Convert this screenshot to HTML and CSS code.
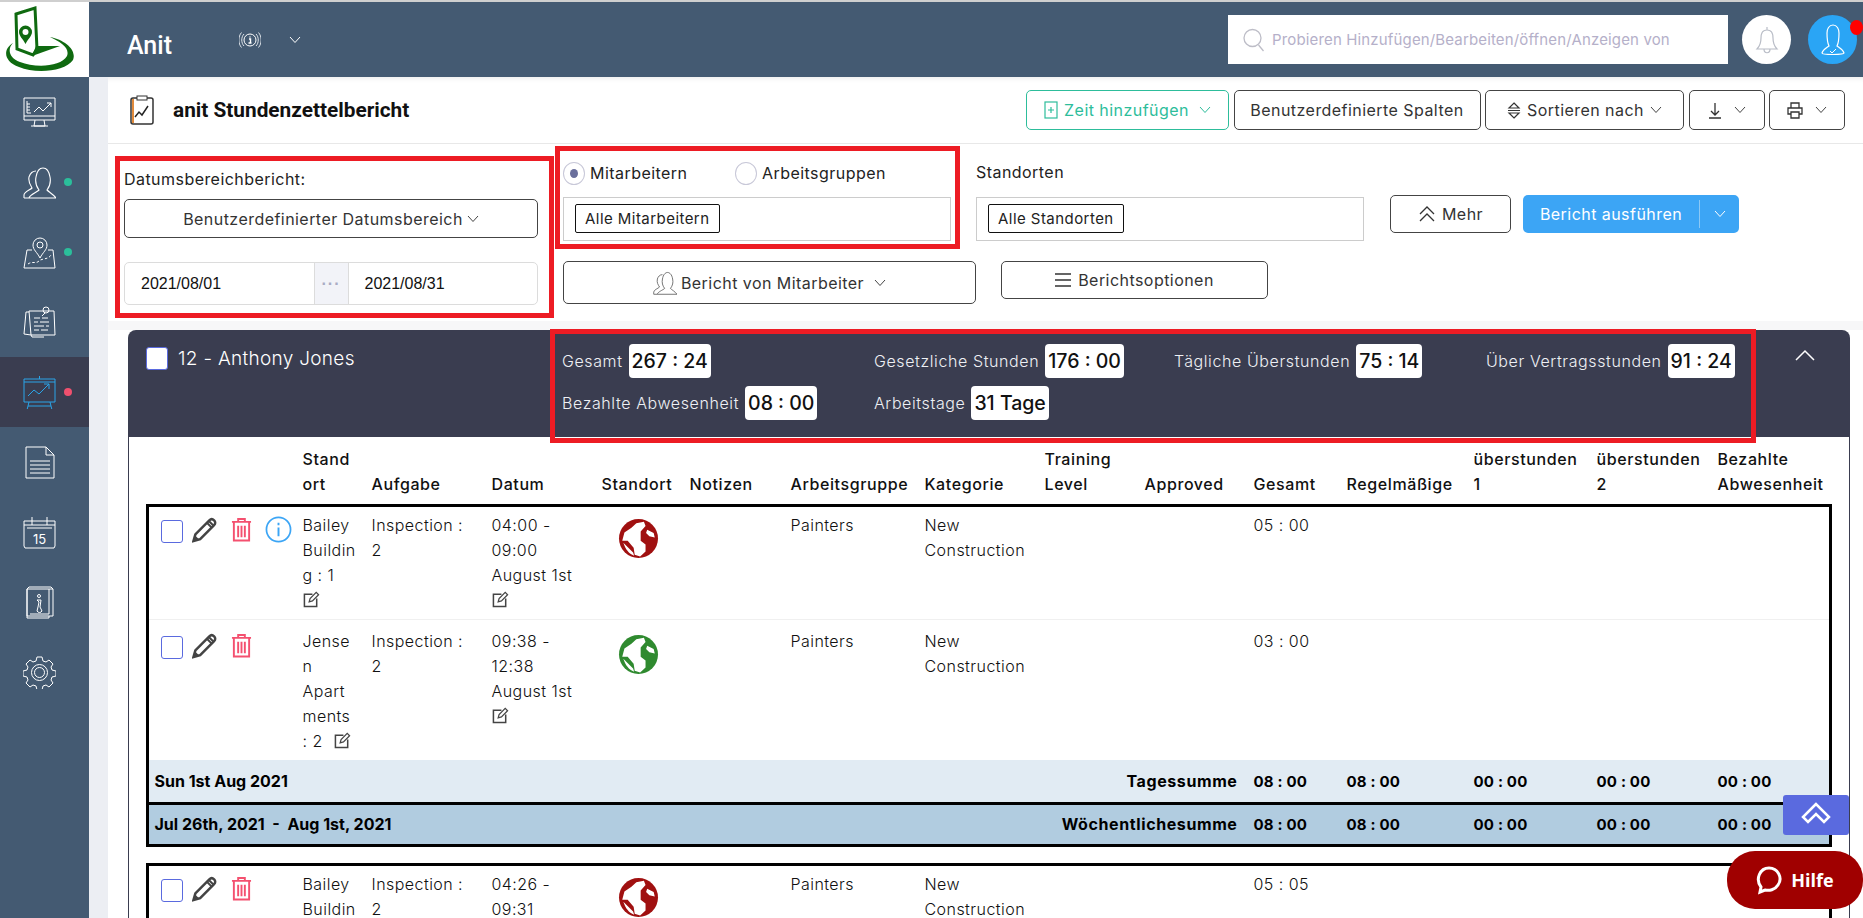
FILE: index.html
```html
<!DOCTYPE html>
<html lang="de">
<head>
    <meta charset="UTF-8">
    <meta name="viewport" content="width=device-width, initial-scale=1.0">
    <title>anit Stundenzettelbericht</title>
    <link rel="stylesheet" href="styles.css">
</head>
<body>
    <svg class="defs" width="0" height="0">
        <symbol id="chev" viewBox="0 0 12 8"><polyline points="1,1 6,6.5 11,1" fill="none" stroke="currentColor" stroke-width="1"/></symbol>
        <symbol id="pencil" viewBox="0 0 26 26"><path d="M1.5 24.5l2-7L18 3c1.5-1.5 3.500-1.500 5 0s1.500 3.500 0 5L8.500 22.500z" fill="none" stroke="#444" stroke-width="2.600"/><path d="M1.500 24.500l1.600-6 4.600 4.600z" fill="#444"/><path d="M15.500 5.500l5 5M17.500 3.600l5 5" stroke="#444" stroke-width="2"/></symbol>
        <symbol id="trash" viewBox="0 0 22 26"><path d="M1 5h20M7.500 5V2h7v3M3 5v19.500h16V5" fill="none" stroke="#f4506f" stroke-width="2"/><path d="M7.500 9v12M11 9v12M14.500 9v12" stroke="#f4506f" stroke-width="2"/></symbol>
        <symbol id="edit" viewBox="0 0 18 18"><path d="M10 3.500H1.500v13h13V8" fill="none" stroke="#444" stroke-width="1.600"/><path d="M6.500 11.500l1-3.500L14 1.500l2.500 2.500L10 10.500z" fill="none" stroke="#444" stroke-width="1.300"/></symbol>
        <symbol id="globe" viewBox="0 0 36 36"><path d="M5 12.500L11.500 8l4.500-4 7-1.500 1.500 4-4.500 5 0 8.500 4.500 3.500 0 6.500-5 4.500-5-1.500-1-6.500L8 20H3z M26 10l6 3 1 4-5-1-3-3z M4 22l9 9 1 3C9 32 6 28 4 22z" fill="#fff"/></symbol>
        <symbol id="people" viewBox="0 0 33 33"><path d="M6 32c0-3 8-6 10-8-3-4-4-8-3-13 1-6 4-9 7-9s6 3 7 9c1 5 0 9-3 13 2 2 6 4 9 8zM1 32v-3c0-3 6-5 8-7-2-3-4-6-3-11 1-3 3-6 7-6M1 32h5" fill="none" stroke="currentColor" stroke-width="1.100"/></symbol>
    </svg>

    <div class="page">
        <aside class="sidebar">
            <div class="logo">
                <svg width="72" height="68" viewBox="0 0 72 68">
                    <path d="M8 38C-2 44-2 56 14 62c16 7 46 5 54-7 4-10-8-20-23-23 11 5 20 11 17 19-6 11-32 12-47 6C4 53 2 44 8 38z" fill="#0f6a10"/>
                    <path d="M11 9L30 3l2 41-4 6-16-6z" fill="#fff" stroke="#0f6a10" stroke-width="3"/>
                    <path d="M27 51L55 41 31 41z" fill="#0f6a10"/>
                    <path d="M14 27a6.500 6.500 0 0 1 13 0c0 4-4 7-6.500 12C18 34 14 31 14 27z" fill="#0f6a10"/>
                    <circle cx="20.500" cy="27" r="3" fill="#fff"/>
                </svg>
            </div>
            <nav>
                <a class="nav-item">
                    <svg class="nav-icon" viewBox="0 0 33 33"><path d="M1 2h31v22H1zM1 20h31M12 24l-1 6h11l-1-6M8 30h17M4 5v12h4M4 8h3M4 11h3M4 14h3M11 16l5-5 4 4 8-8M24 7h4v4"/></svg>
                </a>
                <a class="nav-item">
                    <svg class="nav-icon nav-people"><use href="#people"/></svg>
                    <span class="dot dot-green"></span>
                </a>
                <a class="nav-item">
                    <svg class="nav-icon" viewBox="0 0 33 33"><path d="M17 22c-3-6-7-8-7-13a7 7 0 0 1 14 0c0 5-4 7-7 13z"/><circle cx="17" cy="9" r="3"/><path d="M9 14H4L1 32h31l-2-18h-5"/><path d="M5 28c4-3 8 0 11-3s9-1 12-6" stroke-dasharray="2.500 2"/></svg>
                    <span class="dot dot-green"></span>
                </a>
                <a class="nav-item">
                    <svg class="nav-icon" viewBox="0 0 33 33"><path d="M6 6H3L1 28l7 1M6 5h25l1 24H8zM8 29l1 2h12"/><circle cx="23" cy="4" r="3"/><path d="M22 7l-3 3M11 12h6M19 12h6M11 16h4M17 16h9M11 20h10M23 20h3M11 24h5M18 24h7"/></svg>
                </a>
                <a class="nav-item active">
                    <svg class="nav-icon" viewBox="0 0 33 33"><path d="M1 3h31v23H1zM16.500 0v3M6 26l-2 8M27 26l2 8M5 30h23M1 6h31M5 20l6-6 5 4 10-10M21 8h5v5"/></svg>
                    <span class="dot dot-red"></span>
                </a>
                <a class="nav-item">
                    <svg class="nav-icon" viewBox="0 0 33 33"><path d="M3 1h20l8 8v23H3zM23 1v8h8M7 15h20M7 19h20M7 23h20M7 27h20"/></svg>
                </a>
                <a class="nav-item">
                    <svg class="nav-icon" viewBox="0 0 33 33"><path d="M1 5h31v4H1zM1 9v21l1 2h29l1-2V9M9 1v8M24 1v8M4 12h25"/><text x="16.500" y="28" class="nav-num">15</text></svg>
                </a>
                <a class="nav-item">
                    <svg class="nav-icon" viewBox="0 0 33 33"><path d="M4 3h26v27H4zM4 3v29h22v-2M30 3l-2-2H6L4 3M7 28h19V3"/><circle cx="16" cy="10" r="1.500"/><path d="M14 14h4l-1 7 2 4c-1 2-4 2-5 0l1-4 1-5z"/></svg>
                </a>
                <a class="nav-item">
                    <svg class="nav-icon" viewBox="0 0 33 33"><path d="M14 1h5l1 4 3 1 3-2 4 4-2 3 1 3 4 1v5l-4 1-1 3 2 3-4 4-3-2-3 1-1 4h-5l-1-4-3-1-3 2-4-4 2-3-1-3-4-1v-5l4-1 1-3-2-3 4-4 3 2 3-1z"/><circle cx="16.500" cy="16.500" r="8"/><circle cx="16.500" cy="16.500" r="5"/></svg>
                </a>
            </nav>
        </aside>

        <div class="content">
            <header class="topbar">
                <div class="brand">Anit</div>
                <svg class="info-mark" viewBox="0 0 22 18"><circle cx="11" cy="9" r="6" fill="none" stroke="#fff"/><path d="M5 3C2 6 2 12 5 15M17 3c3 3 3 9 0 12M2.500 1.500c-3.500 4-3.500 11 0 15M19.500 1.500c3.500 4 3.500 11 0 15" fill="none" stroke="#dfe4ea"/><path d="M11 5.500v1M10 8h1.500v4M9.500 12h3" fill="none" stroke="#fff" stroke-width="1.400"/></svg>
                <svg class="chev chev-top"><use href="#chev"/></svg>
                <div class="search">
                    <svg class="search-icon" viewBox="0 0 22 24"><circle cx="9.500" cy="10" r="8.500" fill="none" stroke="#bdbdc7" stroke-width="1.300"/><path d="M15.500 17l5 6" stroke="#bdbdc7" stroke-width="1.300"/></svg>
                    <span>Probieren Hinzufügen/Bearbeiten/öffnen/Anzeigen von</span>
                </div>
                <div class="round round-bell">
                    <svg width="24" height="30" viewBox="0 0 24 30"><path d="M12 2v3M12 5c-5 0-6 4-6 8 0 5-1 8-4 11h20c-3-3-4-6-4-11 0-4-1-8-6-8zM9 24c0 5 6 5 6 0" fill="none" stroke="#b8bcc6" stroke-width="1.200"/></svg>
                </div>
                <div class="round round-user">
                    <svg width="26" height="36" viewBox="0 0 26 36"><path d="M9 24C5 27 3 28 2 31c0 2 22 2 22 0-1-3-3-4-7-7 2-4 2-9 2-13 0-4-2-8-6-8s-6 4-6 8c0 4 0 9 2 13z" fill="none" stroke="#fff" stroke-width="1.200"/><path d="M10 29l2 2 4-4" fill="none" stroke="#fff"/></svg>
                    <span class="user-alert"></span>
                </div>
            </header>

            <main class="main">
                <div class="panel">
                    <div class="toolbar">
                        <div class="page-title">
                            <svg width="24" height="30" viewBox="0 0 24 30"><rect x="1" y="3" width="22" height="26" rx="2" fill="#fff" stroke="#333" stroke-width="1.500"/><rect x="2" y="4" width="2" height="24" fill="#e08a3c"/><rect x="7" y="1" width="10" height="4" fill="#fff" stroke="#333"/><path d="M5 22l4-5 3 3 6-9" fill="none" stroke="#222" stroke-width="1.500"/></svg>
                            <h1>anit Stundenzettelbericht</h1>
                        </div>
                        <div class="tool-buttons">
                            <button class="btn btn-add">
                                <svg width="14" height="18" viewBox="0 0 14 18"><rect x="1" y="1" width="12" height="16" fill="none" stroke="#2dbd9b" stroke-width="1.200"/><path d="M7 6v6M4 9h6" stroke="#2dbd9b" stroke-width="1.200"/></svg>
                                Zeit hinzufügen
                                <svg class="chev"><use href="#chev"/></svg>
                            </button>
                            <button class="btn btn-cols">Benutzerdefinierte Spalten</button>
                            <button class="btn btn-sort">
                                <svg width="14" height="17" viewBox="0 0 14 17"><path d="M7 1l5 5H2zM7 16l5-5H2zM1 8.500h12" fill="none" stroke="#333" stroke-width="1.200"/></svg>
                                Sortieren nach
                                <svg class="chev"><use href="#chev"/></svg>
                            </button>
                            <button class="btn btn-icon">
                                <svg width="14" height="17" viewBox="0 0 14 17"><path d="M7 1v12M3 9l4 4 4-4M1 16h12" fill="none" stroke="#333" stroke-width="1.300"/></svg>
                                <svg class="chev"><use href="#chev"/></svg>
                            </button>
                            <button class="btn btn-icon">
                                <svg width="16" height="17" viewBox="0 0 16 17"><path d="M4 6V1h8v5M4 12H1V6h14v6h-3M4 10h8v6H4z" fill="none" stroke="#333" stroke-width="1.300"/></svg>
                                <svg class="chev"><use href="#chev"/></svg>
                            </button>
                        </div>
                    </div>

                    <section class="filters">
                        <div class="date-col">
                            <label class="date-label">Datumsbereichbericht:</label>
                            <button class="btn btn-wide btn-range">Benutzerdefinierter Datumsbereich <svg class="chev"><use href="#chev"/></svg></button>
                            <div class="date-group">
                                <span class="date-val">2021/08/01</span>
                                <span class="date-sep">···</span>
                                <span class="date-val">2021/08/31</span>
                            </div>
                        </div>
                        <div class="who-col">
                            <div class="radio-row">
                                <span class="radio radio-on"></span><span class="radio-text">Mitarbeitern</span>
                                <span class="radio"></span><span class="radio-text">Arbeitsgruppen</span>
                            </div>
                            <div class="select-box"><span class="tag">Alle Mitarbeitern</span></div>
                            <button class="btn btn-wide btn-who">
                                <svg class="who-icon"><use href="#people"/></svg>
                                Bericht von Mitarbeiter <svg class="chev"><use href="#chev"/></svg>
                            </button>
                        </div>
                        <div class="loc-col">
                            <div class="loc-top">
                                <div class="loc-field">
                                    <div class="loc-label">Standorten</div>
                                    <div class="select-box"><span class="tag">Alle Standorten</span></div>
                                </div>
                                <div class="run-actions">
                                    <button class="btn btn-more">
                                        <svg width="18" height="18" viewBox="0 0 18 18"><path d="M2 9l7-7 7 7M2 16l7-7 7 7" fill="none" stroke="#333" stroke-width="1.300"/></svg>
                                        Mehr
                                    </button>
                                    <button class="btn btn-run">
                                        <span class="run-text">Bericht ausführen</span>
                                        <span class="run-caret"><svg class="chev"><use href="#chev"/></svg></span>
                                    </button>
                                </div>
                            </div>
                            <button class="btn btn-options">
                                <svg width="16" height="14" viewBox="0 0 16 14"><path d="M0 1h16M0 7h16M0 13h16" stroke="#333" stroke-width="1.300"/></svg>
                                Berichtsoptionen
                            </button>
                        </div>
                    </section>

                    <div class="band"></div>

                    <section class="card">
                        <div class="card-head">
                            <div class="person">
                                <span class="check check-white"></span>
                                <span class="person-name">12 - Anthony Jones</span>
                            </div>
                            <div class="stats">
                                <div class="stat"><span>Gesamt</span><b>267 : 24</b></div>
                                <div class="stat"><span>Gesetzliche Stunden</span><b>176 : 00</b></div>
                                <div class="stat"><span>Tägliche Überstunden</span><b>75 : 14</b></div>
                                <div class="stat"><span>Über Vertragsstunden</span><b>91 : 24</b></div>
                                <div class="stat"><span>Bezahlte Abwesenheit</span><b>08 : 00</b></div>
                                <div class="stat"><span>Arbeitstage</span><b>31 Tage</b></div>
                            </div>
                            <svg class="collapse" viewBox="0 0 20 12"><polyline points="1,11 10,2 19,11" fill="none" stroke="#fff" stroke-width="1.500"/></svg>
                        </div>

                        <div class="card-body">
                            <div class="cols col-head">
                                <div></div>
                                <div>Stand<br>ort</div>
                                <div>Aufgabe</div>
                                <div>Datum</div>
                                <div>Standort</div>
                                <div>Notizen</div>
                                <div>Arbeitsgruppe</div>
                                <div>Kategorie</div>
                                <div>Training<br>Level</div>
                                <div>Approved</div>
                                <div>Gesamt</div>
                                <div>Regelmäßige</div>
                                <div>überstunden<br>1</div>
                                <div>überstunden<br>2</div>
                                <div>Bezahlte<br>Abwesenheit</div>
                            </div>

                            <div class="entries">
                                <div class="cols entry entry-first">
                                    <div class="actions">
                                        <span class="check"></span>
                                        <svg class="ic-pencil"><use href="#pencil"/></svg>
                                        <svg class="ic-trash"><use href="#trash"/></svg>
                                        <svg class="ic-info" viewBox="0 0 28 28"><circle cx="14" cy="14" r="12.500" fill="none" stroke="#3ca5f5" stroke-width="1.800"/><path d="M14 7v2.500M14 12v9" stroke="#3ca5f5" stroke-width="2"/></svg>
                                    </div>
                                    <div>Bailey<br>Buildin<br>g : 1<br><svg class="ic-edit"><use href="#edit"/></svg></div>
                                    <div>Inspection :<br>2</div>
                                    <div>04:00 -<br>09:00<br>August 1st<br><svg class="ic-edit"><use href="#edit"/></svg></div>
                                    <div class="globe-cell"><svg class="globe globe-red"><use href="#globe"/></svg></div>
                                    <div></div>
                                    <div>Painters</div>
                                    <div>New<br>Construction</div>
                                    <div></div>
                                    <div></div>
                                    <div>05 : 00</div>
                                </div>
                                <div class="cols entry entry-second">
                                    <div class="actions">
                                        <span class="check"></span>
                                        <svg class="ic-pencil"><use href="#pencil"/></svg>
                                        <svg class="ic-trash"><use href="#trash"/></svg>
                                    </div>
                                    <div>Jense<br>n<br>Apart<br>ments<br>: 2 <svg class="ic-edit ic-inline"><use href="#edit"/></svg></div>
                                    <div>Inspection :<br>2</div>
                                    <div>09:38 -<br>12:38<br>August 1st<br><svg class="ic-edit"><use href="#edit"/></svg></div>
                                    <div class="globe-cell"><svg class="globe globe-green"><use href="#globe"/></svg></div>
                                    <div></div>
                                    <div>Painters</div>
                                    <div>New<br>Construction</div>
                                    <div></div>
                                    <div></div>
                                    <div>03 : 00</div>
                                </div>
                                <div class="cols total total-day">
                                    <div class="total-date">Sun 1st Aug 2021</div>
                                    <div class="total-label">Tagessumme</div>
                                    <div>08 : 00</div><div>08 : 00</div><div>00 : 00</div><div>00 : 00</div><div>00 : 00</div>
                                </div>
                                <div class="cols total total-week">
                                    <div class="total-date">Jul 26th, 2021 &nbsp;-&nbsp; Aug 1st, 2021</div>
                                    <div class="total-label">Wöchentlichesumme</div>
                                    <div>08 : 00</div><div>08 : 00</div><div>00 : 00</div><div>00 : 00</div><div>00 : 00</div>
                                </div>
                            </div>

                            <div class="entries entries-next">
                                <div class="cols entry entry-first">
                                    <div class="actions">
                                        <span class="check"></span>
                                        <svg class="ic-pencil"><use href="#pencil"/></svg>
                                        <svg class="ic-trash"><use href="#trash"/></svg>
                                    </div>
                                    <div>Bailey<br>Buildin</div>
                                    <div>Inspection :<br>2</div>
                                    <div>04:26 -<br>09:31</div>
                                    <div class="globe-cell"><svg class="globe globe-red"><use href="#globe"/></svg></div>
                                    <div></div>
                                    <div>Painters</div>
                                    <div>New<br>Construction</div>
                                    <div></div>
                                    <div></div>
                                    <div>05 : 05</div>
                                </div>
                            </div>
                        </div>
                    </section>
                </div>
            </main>
        </div>

        <div class="mark mark-date"></div>
        <div class="mark mark-who"></div>
        <div class="mark mark-stats"></div>

        <button class="to-top">
            <svg width="30" height="26" viewBox="0 0 30 26"><path d="M15 2L2 15l5 5 8-8 8 8 5-5z" fill="none" stroke="#fff" stroke-width="2.500"/></svg>
        </button>
        <button class="help">
            <svg width="26" height="30" viewBox="0 0 26 30"><path d="M4 27l1-5C-1 14 4 3 13 3s14 10 9 17c-3 5-9 6-13 5z" fill="none" stroke="#fff" stroke-width="3"/></svg>
            Hilfe
        </button>
    </div>
</body>
</html>
```

FILE: styles.css
```css
* {
    box-sizing: border-box;
}
html, body {
    margin: 0;
    height: 100%;
    overflow: hidden;
}
body {
    font-family: Inter, "Open Sans", sans-serif;
    font-size: 16px;
    letter-spacing: 0.45px;
    color: #222;
    background: white;
}
h1 {
    margin: 0;
}
button {
    font-family: inherit;
    letter-spacing: inherit;
}
.defs {
    position: absolute;
}
.page {
    position: relative;
    display: flex;
    height: 918px;
    overflow: hidden;
    border-top: 2px solid #cfcfcf;
}

/* sidebar */
.sidebar {
    width: 89px;
    flex-shrink: 0;
    background: #445a72;
}
.logo {
    height: 75px;
    background: white;
    padding: 3px 0 0 5px;
}
.nav-item {
    display: flex;
    align-items: center;
    height: 70px;
    padding-left: 23px;
}
.nav-item.active {
    background: #3a3d50;
}
.nav-icon {
    width: 33px;
    height: 33px;
    fill: none;
    stroke: #fff;
    stroke-width: 1;
}
.nav-people {
    color: #fff;
    stroke: none;
}
.active .nav-icon {
    stroke: #2aa5e8;
}
.nav-num {
    font-size: 13px;
    fill: #fff;
    stroke: none;
    text-anchor: middle;
    letter-spacing: 0;
}
.dot {
    width: 8px;
    height: 8px;
    margin-left: 8px;
    border-radius: 50%;
}
.dot-green {
    background: #2bbf9b;
}
.dot-red {
    background: #f0506e;
}

/* top bar */
.content {
    flex: 1;
    min-width: 0;
    display: flex;
    flex-direction: column;
}
.topbar {
    display: flex;
    align-items: center;
    height: 75px;
    padding-left: 38px;
    background: #445a72;
    color: white;
}
.brand {
    width: 112px;
    font-size: 25px;
    font-weight: 500;
    font-family: Roboto, sans-serif;
    letter-spacing: 0;
    margin-top: 12px;
}
.info-mark {
    width: 22px;
    height: 18px;
}
.chev {
    width: 12px;
    height: 8px;
    color: #444;
    flex-shrink: 0;
}
.chev-top {
    margin: 0 0 0 28px;
    color: white;
}
.search {
    display: flex;
    align-items: center;
    gap: 7px;
    width: 500px;
    height: 49px;
    margin: 0 14px 0 auto;
    padding-left: 15px;
    background: white;
    color: #b5b0c9;
    font-size: 15px;
    letter-spacing: 0.15px;
}
.search-icon {
    width: 22px;
    height: 24px;
}
.round {
    position: relative;
    display: flex;
    align-items: center;
    justify-content: center;
    width: 49px;
    height: 49px;
    border-radius: 50%;
}
.round-bell {
    background: white;
}
.round-user {
    margin: 0 6px 0 17px;
    background: #2aa5f5;
}
.user-alert {
    position: absolute;
    top: 5px;
    right: -6px;
    width: 13px;
    height: 15px;
    border-radius: 50%;
    background: #f00;
}

/* page area */
.main {
    flex: 1;
    min-height: 0;
    padding-left: 19px;
    background: #eceef3;
}
.panel {
    height: 100%;
    background: white;
}
.toolbar {
    display: flex;
    justify-content: space-between;
    align-items: center;
    height: 67px;
    padding: 0 18px 0 22px;
    border-bottom: 1px solid #e8e8e8;
    box-shadow: inset 0 6px 6px -6px rgba(0, 0, 0, 0.12);
}
.page-title {
    display: flex;
    align-items: center;
    gap: 19px;
}
h1 {
    font-family: Roboto, sans-serif;
    font-size: 20.8px;
    font-weight: 700;
    letter-spacing: 0;
    color: #111;
}
.tool-buttons {
    display: flex;
    gap: 4.5px;
}
.btn {
    display: flex;
    align-items: center;
    justify-content: center;
    gap: 6px;
    height: 40px;
    padding: 0;
    background: white;
    border: 1.5px solid #444;
    border-radius: 5px;
    font-size: 16px;
    color: #333;
    cursor: pointer;
}
.btn-add {
    width: 203px;
    border-color: #2dbd9b;
    color: #2dbd9b;
}
.btn-add .chev {
    margin-left: 4px;
    color: #2dbd9b;
}
.btn-cols {
    width: 247px;
}
.btn-sort {
    width: 199px;
}
.btn-icon {
    width: 76px;
    gap: 12px;
}
.btn-wide {
    width: 100%;
}

/* filters */
.filters {
    display: flex;
    height: 177px;
    padding-left: 16px;
}
.date-col {
    width: 414px;
    margin-right: 25px;
    padding-top: 24px;
}
.date-label {
    display: block;
    height: 31px;
    line-height: 22px;
}
.btn-range {
    height: 39px;
    gap: 4px;
}
.date-group {
    display: flex;
    height: 43px;
    margin-top: 24px;
    border: 1.5px solid #dcdcdc;
    border-radius: 5px;
    font-family: "Liberation Sans", Arial, sans-serif;
    letter-spacing: 0;
    color: #111;
}
.date-val {
    flex: 1;
    display: flex;
    align-items: center;
    padding-left: 16px;
}
.date-sep {
    display: flex;
    align-items: center;
    justify-content: center;
    width: 35px;
    background: #f2f3f8;
    border: solid #dcdcdc;
    border-width: 0 1px;
    color: #a9acc4;
    font-weight: bold;
    letter-spacing: 1px;
}
.who-col {
    width: 413px;
    padding-top: 17px;
}
.radio-row {
    display: flex;
    align-items: center;
    height: 24px;
    margin-bottom: 12px;
}
.radio {
    position: relative;
    width: 22px;
    height: 23px;
    border: 1px solid #c8c8d8;
    border-radius: 50%;
}
.radio-on::after {
    content: "";
    position: absolute;
    top: 6px;
    left: 6px;
    width: 8px;
    height: 9px;
    border-radius: 50%;
    background: #6a6f9c;
}
.radio-text {
    width: 150px;
    padding-left: 5px;
}
.select-box {
    width: 388px;
    height: 44px;
    padding: 6px 11px;
    border: 1.5px solid #ccc;
}
.tag {
    display: inline-flex;
    align-items: center;
    height: 29px;
    padding: 0 9px;
    border: 1.5px solid #111;
    border-radius: 2px;
    font-size: 15px;
    color: #222;
}
.btn-who {
    height: 43px;
    margin-top: 20px;
    gap: 4px;
}
.who-icon {
    width: 24px;
    height: 24px;
    color: #555;
}
.btn-who .chev {
    margin-left: 6px;
}
.loc-col {
    flex: 1;
    padding-top: 17px;
}
.loc-top {
    display: flex;
}
.loc-label {
    height: 36px;
    line-height: 23px;
}
.run-actions {
    display: flex;
    gap: 12px;
    margin: 34px 0 0 26px;
}
.btn-more {
    width: 121px;
    height: 38px;
}
.btn-run {
    width: 216px;
    height: 38px;
    background: #3ca5f5;
    border: none;
    color: white;
    gap: 0;
}
.run-text {
    flex: 1;
}
.run-caret {
    display: flex;
    align-items: center;
    justify-content: center;
    width: 40px;
    height: 28px;
    border-left: 1px solid #8cc8f5;
}
.run-caret .chev {
    color: white;
}
.btn-options {
    width: 267px;
    height: 38px;
    margin: 20px 0 0 25px;
    gap: 7px;
}
.band {
    height: 9px;
    background: #f7f7f8;
}

/* employee card */
.card {
    --cols: 154px 69px 120px 110px 88px 101px 134px 120px 100px 109px 93px 127px 123px 121px 111px;
    margin: 0 13px 0 20px;
}
.card-head {
    display: flex;
    height: 107px;
    padding: 14px 0 0 18px;
    background: #3a3d50;
    border-radius: 8px 8px 0 0;
    color: white;
}
.person {
    display: flex;
    width: 416px;
    height: 28px;
    align-items: center;
    gap: 10px;
}
.check {
    flex-shrink: 0;
    width: 22px;
    height: 23px;
    border: 1px solid #5a6adf;
    border-radius: 3px;
    background: white;
}
.person-name {
    font-size: 19px;
    font-weight: 300;
    letter-spacing: 0.3px;
}
.stats {
    display: grid;
    grid-template-columns: 312px 300px 312px 1fr;
    grid-template-rows: 34px 34px;
    row-gap: 8px;
    width: 1230px;
}
.stat {
    display: flex;
    align-items: center;
    gap: 6px;
    font-weight: 300;
    letter-spacing: 0.6px;
    color: #eef0f4;
}
.stat b {
    padding: 0 3px;
    line-height: 34px;
    background: white;
    border-radius: 4px;
    color: #111;
    font-size: 19.5px;
    font-weight: 500;
    letter-spacing: 0;
}
.collapse {
    width: 20px;
    height: 12px;
    margin: 5px 0 0 3px;
}
.card-body {
    padding-bottom: 40px;
    border: solid #3a3d50;
    border-width: 0 1.5px;
}
.cols {
    display: grid;
    grid-template-columns: var(--cols);
}
.col-head {
    align-items: end;
    height: 67px;
    margin-left: 19.5px;
    padding-bottom: 7px;
    font-weight: 500;
    line-height: 25px;
    letter-spacing: 0.6px;
    color: #111;
}
.entries {
    width: 1686px;
    margin-left: 16.5px;
    border: 3px solid #000;
    line-height: 25px;
    font-weight: 300;
    color: #111;
}
.entries-next {
    margin-top: 16px;
}
.entry-first {
    height: 113px;
    padding-top: 6px;
    border-bottom: 1px solid #f0f0f0;
}
.entry-second {
    height: 140px;
    padding-top: 9px;
}
.actions {
    display: flex;
    align-items: flex-start;
    padding: 7px 0 0 12px;
}
.ic-pencil {
    width: 25px;
    height: 26px;
    margin: -3px 0 0 9px;
}
.ic-trash {
    width: 21px;
    height: 25px;
    margin: -3px 0 0 14px;
}
.ic-info {
    width: 27px;
    height: 27px;
    margin: -4px 0 0 13px;
}
.ic-edit {
    width: 17px;
    height: 17px;
    vertical-align: -2px;
}
.ic-inline {
    margin-left: 6px;
}
.globe-cell {
    padding: 6px 0 0 17px;
}
.globe {
    display: block;
    width: 39px;
    height: 39px;
    border-radius: 50%;
}
.globe-red {
    background: #a01010;
}
.globe-green {
    background: #2f8a2f;
}
.total {
    align-items: center;
    font-size: 15px;
    font-weight: 700;
    letter-spacing: 0.2px;
    color: #000;
}
.total-day {
    height: 45px;
    background: #e1ebf3;
    border-bottom: 3px solid #000;
}
.total-week {
    height: 39px;
    background: #b1cce0;
}
.total-date {
    grid-column: 1 / 6;
    padding-left: 6px;
    font-size: 16px;
    letter-spacing: 0;
}
.total-label {
    grid-column: 6 / 11;
    padding-right: 16px;
    text-align: right;
    font-size: 16px;
    letter-spacing: 0.6px;
}

/* annotation boxes drawn over the page */
.mark {
    position: absolute;
    border: 5px solid #ed1c24;
    pointer-events: none;
}
.mark-date {
    left: 115px;
    top: 154px;
    width: 439px;
    height: 162px;
}
.mark-who {
    left: 555px;
    top: 144px;
    width: 405px;
    height: 103px;
}
.mark-stats {
    left: 550px;
    top: 327px;
    width: 1206px;
    height: 114px;
}

/* floating buttons */
.to-top {
    position: absolute;
    left: 1783px;
    top: 793px;
    display: flex;
    align-items: center;
    justify-content: center;
    width: 66px;
    height: 40px;
    border: none;
    border-radius: 3px;
    background: #5a6adf;
}
.help {
    position: absolute;
    left: 1727px;
    top: 849px;
    display: flex;
    align-items: center;
    justify-content: center;
    gap: 9px;
    width: 136px;
    height: 58px;
    border: none;
    border-radius: 28px;
    background: #a00000;
    color: white;
    font-family: "Open Sans", sans-serif;
    font-size: 18px;
    font-weight: 700;
    letter-spacing: 0;
}
```
